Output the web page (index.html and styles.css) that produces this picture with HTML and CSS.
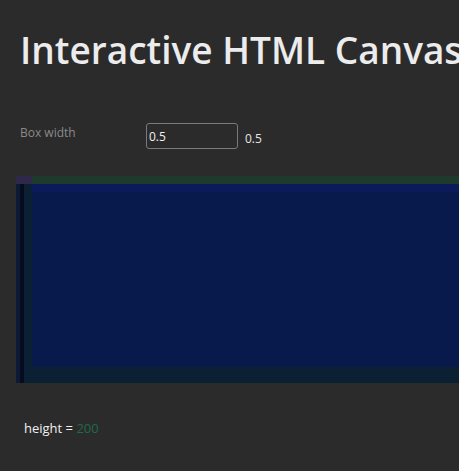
FILE: index.html
```html
<!DOCTYPE html>
<html>
<head>
<meta charset="utf-8">
<link rel="stylesheet" href="styles.css">
</head>
<body>
<h1 class="title">Interactive HTML Canvas</h1>
<div class="control">
  <label class="label" for="bw">Box width</label>
  <input class="num" id="bw" type="text" value="0.5">
  <span class="value">0.5</span>
</div>
<div class="stage">
  <svg class="canvas" width="443" height="207" viewBox="0 0 443 207">
    <rect x="0" y="0" width="443" height="207" fill="#0b2133"/>
    <rect x="0" y="0" width="443" height="8" fill="#1d3a2d"/>
    <rect x="0" y="0" width="16" height="8" fill="#30284a"/>
    <rect x="16" y="8" width="427" height="8" fill="#0b1a5a"/>
    <rect x="16" y="16" width="427" height="175" fill="#081a4b"/>
    <rect x="0" y="8" width="4" height="199" fill="#0d1a36"/>
    <rect x="4" y="8" width="4" height="199" fill="#060b1d"/>
  </svg>
</div>
<p class="readout">height = <span class="num-out">200</span></p>
</body>
</html>
```
FILE: styles.css
```css
html, body {
  margin: 0;
  padding: 0;
  background: #2b2b2b;
  overflow: hidden;
}
body {
  font-family: "Open Sans", "Noto Sans", sans-serif;
  color: #e6e6e6;
  width: 459px;
  height: 471px;
}
.title {
  margin: 0;
  padding: 26px 0 0 20px;
  font-size: 37px;
  font-weight: 600;
  line-height: 48px;
  white-space: nowrap;
  color: #ececec;
}
.control {
  display: flex;
  align-items: center;
  margin-top: 49px;
  padding-left: 20px;
  height: 26px;
}
.label {
  width: 126px;
  font-size: 12px;
  color: #8a8a8a;
  align-self: flex-start;
  margin-top: 1px;
}
.num {
  box-sizing: border-box;
  width: 92px;
  height: 26px;
  border: 1px solid #7a7a7a;
  border-radius: 3px;
  background: #2b2b2b;
  color: #f0f0f0;
  font-family: "Open Sans", sans-serif;
  font-size: 12px;
  padding: 0 2px;
  outline: none;
}
.value {
  margin-left: 7px;
  margin-top: 4px;
  font-size: 12px;
  color: #e6e6e6;
}
.stage {
  margin-top: 27px;
  padding-left: 16px;
  height: 207px;
}
.canvas {
  display: block;
}
.readout {
  margin: 36px 0 0 24px;
  font-size: 13px;
  color: #f0f0f0;
}
.num-out {
  color: #1f6a48;
}
```
